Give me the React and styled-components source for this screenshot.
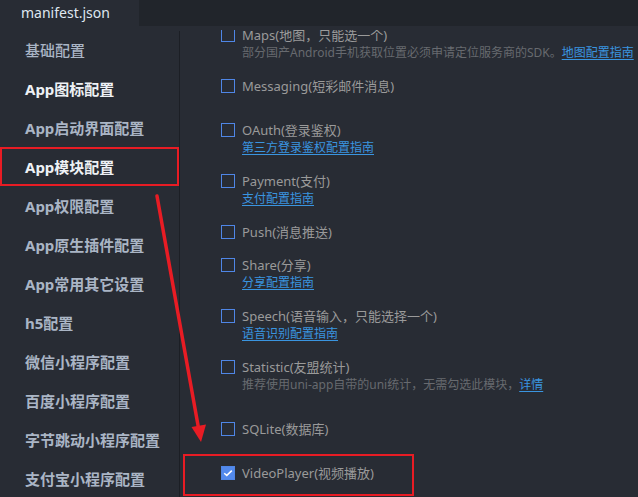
import React from "react";
import styled, { createGlobalStyle } from "styled-components";

const GlobalStyle = createGlobalStyle`
  html, body { margin: 0; padding: 0; background: #282c34; overflow: hidden; }
  * { box-sizing: border-box; }
`;

const FONT = `"Noto Sans", "Noto Sans CJK SC", sans-serif`;

const Page = styled.div`
  position: relative;
  width: 638px;
  height: 497px;
  display: grid;
  grid-template-rows: 26px 1fr;
  background: #282c34;
  font-family: ${FONT};
  overflow: hidden;
`;

const TabBar = styled.div`
  display: flex;
  background: #21252b;
`;

const Tab = styled.div`
  width: 139px;
  background: #282c34;
  padding-left: 21px;
  color: #dfe7f0;
  font-size: 14px;
  line-height: 25px;
`;

const Body = styled.div`
  display: grid;
  grid-template-columns: 179px 1px 1fr;
  min-height: 0;
`;

const Sidebar = styled.nav`
  display: flex;
  flex-direction: column;
  padding-top: 4px;
`;

const NavItem = styled.div`
  height: 39px;
  display: flex;
  align-items: center;
  padding-left: 25px;
  font-size: 15px;
  font-weight: ${(p) => (p.$light ? 500 : 700)};
  color: ${(p) => (p.$bright ? "#eef1f5" : "#aab5c5")};
  white-space: nowrap;
  outline: ${(p) => (p.$marked ? "2px solid #e81c24" : "none")};
  outline-offset: -2px;
`;

const Divider = styled.div`
  margin-top: 5px;
  background: #1c1f25;
`;

const Content = styled.main`
  padding-top: 4px;
  min-height: 0;
  display: flex;
  flex-direction: column;
`;

const Viewport = styled.div`
  flex: 1;
  overflow: hidden;
`;

const List = styled.div`
  margin-top: -4px;
  padding-left: 41px;
  display: flex;
  flex-direction: column;
`;

const Item = styled.div`
  position: relative;
  display: grid;
  grid-template-columns: 14px 1fr;
  grid-auto-rows: 18px;
  column-gap: 7px;
  margin-bottom: ${(p) => (p.$extra ? 26 : 15)}px;

  ${(p) =>
    p.$marked &&
    `
    &::after {
      content: "";
      position: absolute;
      left: -38px;
      top: -10px;
      width: 227px;
      height: 38px;
      border: 2px solid #e81c24;
      pointer-events: none;
    }
  `}
`;

const Box = styled.span`
  align-self: center;
  width: 14px;
  height: 14px;
  border: 1px solid #4f86e6;
  background: ${(p) => (p.$checked ? "#5289ec" : "transparent")};
  display: flex;
  align-items: center;
  justify-content: center;
`;

const Label = styled.span`
  font-size: 13px;
  line-height: 18px;
  color: #9a9a9a;
  white-space: nowrap;
`;

const Sub = styled.div`
  grid-column: 2;
  font-size: 12px;
  line-height: 18px;
  color: #676a6f;
  white-space: nowrap;
  overflow: hidden;
`;

const Link = styled.a`
  color: #3a95e0;
  text-decoration: underline;
  text-underline-offset: 2px;
  cursor: pointer;
`;

const ArrowLayer = styled.svg`
  position: absolute;
  left: 0;
  top: 0;
  pointer-events: none;
`;

const navItems = [
  { t: "基础配置", light: true },
  { t: "App图标配置", bright: true },
  { t: "App启动界面配置" },
  { t: "App模块配置", bright: true, marked: true },
  { t: "App权限配置" },
  { t: "App原生插件配置" },
  { t: "App常用其它设置" },
  { t: "h5配置" },
  { t: "微信小程序配置" },
  { t: "百度小程序配置" },
  { t: "字节跳动小程序配置" },
  { t: "支付宝小程序配置" },
];

const modules = [
  { label: "Maps(地图，只能选一个)", desc: "部分国产Android手机获取位置必须申请定位服务商的SDK。", link: "地图配置指南" },
  { label: "Messaging(短彩邮件消息)", extra: true },
  { label: "OAuth(登录鉴权)", link: "第三方登录鉴权配置指南" },
  { label: "Payment(支付)", link: "支付配置指南" },
  { label: "Push(消息推送)" },
  { label: "Share(分享)", link: "分享配置指南" },
  { label: "Speech(语音输入，只能选择一个)", link: "语音识别配置指南" },
  { label: "Statistic(友盟统计)", desc: "推荐使用uni-app自带的uni统计，无需勾选此模块，", link: "详情", extra: true },
  { label: "SQLite(数据库)", extra: true },
  { label: "VideoPlayer(视频播放)", checked: true, marked: true },
];

function Check() {
  return (
    <svg width="10" height="8" viewBox="0 0 10 8">
      <path d="M1.2 4.2 L3.8 6.4 L8.8 1.6" fill="none" stroke="#fff" strokeWidth="1.5" />
    </svg>
  );
}

export default function App() {
  return (
    <>
      <GlobalStyle />
      <Page>
        <TabBar>
          <Tab>manifest.json</Tab>
        </TabBar>
        <Body>
          <Sidebar>
            {navItems.map((n) => (
              <NavItem key={n.t} $bright={n.bright} $light={n.light} $marked={n.marked}>
                {n.t}
              </NavItem>
            ))}
          </Sidebar>
          <Divider />
          <Content>
            <Viewport>
              <List>
                {modules.map((m) => (
                  <Item key={m.label} $extra={m.extra} $marked={m.marked}>
                    <Box $checked={m.checked}>{m.checked && <Check />}</Box>
                    <Label>{m.label}</Label>
                    {(m.desc || m.link) && (
                      <Sub>
                        {m.desc}
                        {m.link && <Link>{m.link}</Link>}
                      </Sub>
                    )}
                  </Item>
                ))}
              </List>
            </Viewport>
          </Content>
        </Body>
        <ArrowLayer width="638" height="497" viewBox="0 0 638 497">
          <line x1="157" y1="196" x2="198.5" y2="428" stroke="#e81c24" strokeWidth="3.5" strokeLinecap="round" />
          <polygon points="201,442 191.5,427 206,424.5" fill="#e81c24" />
        </ArrowLayer>
      </Page>
    </>
  );
}
